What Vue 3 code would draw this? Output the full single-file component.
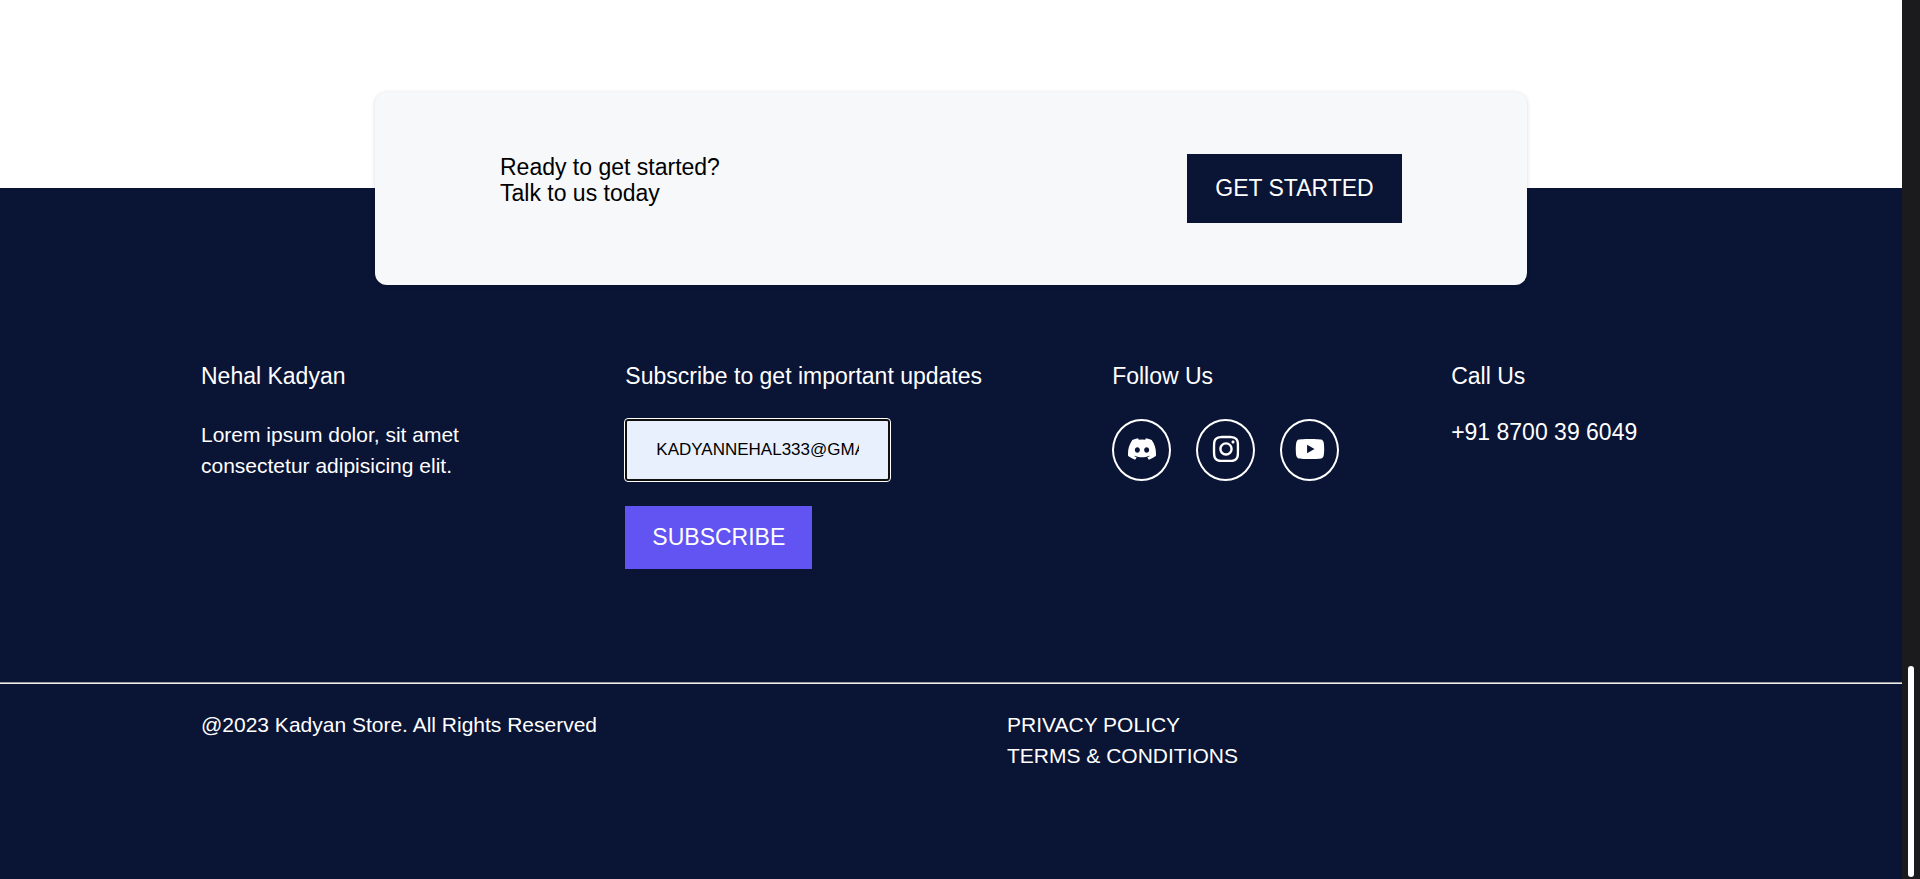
<script setup>
import { ref } from 'vue'

const email = ref('kadyannehal333@gmail.com')
const networks = [
  {
    name: 'Discord',
    size: 28,
    box: '0 0 16 16',
    path: 'M13.545 2.907a13.2 13.2 0 0 0-3.257-1.011.05.05 0 0 0-.052.025c-.141.25-.297.577-.406.833a12.2 12.2 0 0 0-3.658 0 8 8 0 0 0-.412-.833.05.05 0 0 0-.052-.025c-1.125.194-2.22.534-3.257 1.011a.04.04 0 0 0-.021.018C.356 6.024-.213 9.047.066 12.032q.003.022.021.037a13.3 13.3 0 0 0 3.995 2.02.05.05 0 0 0 .056-.019q.463-.63.818-1.329a.05.05 0 0 0-.01-.059l-.018-.011a9 9 0 0 1-1.248-.595.05.05 0 0 1-.02-.066l.015-.019q.127-.095.248-.195a.05.05 0 0 1 .051-.007c2.619 1.196 5.454 1.196 8.041 0a.05.05 0 0 1 .053.007q.121.1.248.195a.05.05 0 0 1-.004.085 8 8 0 0 1-1.249.594.05.05 0 0 0-.03.03.05.05 0 0 0 .003.041c.24.465.515.909.817 1.329a.05.05 0 0 0 .056.019 13.2 13.2 0 0 0 4.001-2.02.05.05 0 0 0 .021-.037c.334-3.451-.559-6.449-2.366-9.106a.03.03 0 0 0-.02-.019m-8.198 7.307c-.789 0-1.438-.724-1.438-1.612s.637-1.613 1.438-1.613c.807 0 1.45.73 1.438 1.613 0 .888-.637 1.612-1.438 1.612m5.316 0c-.788 0-1.438-.724-1.438-1.612s.637-1.613 1.438-1.613c.807 0 1.451.73 1.438 1.613 0 .888-.631 1.612-1.438 1.612'
  },
  {
    name: 'Instagram',
    size: 30,
    box: '0 0 448 512',
    path: 'M224.1 141c-63.6 0-114.9 51.3-114.9 114.9s51.3 114.9 114.9 114.9S339 319.5 339 255.9 287.7 141 224.1 141zm0 189.6c-41.1 0-74.7-33.5-74.7-74.7s33.5-74.7 74.7-74.7 74.7 33.5 74.7 74.7-33.6 74.7-74.7 74.7zm146.4-194.3c0 14.9-12 26.8-26.8 26.8-14.9 0-26.8-12-26.8-26.8s12-26.8 26.8-26.8 26.8 12 26.8 26.8zm76.1 27.2c-1.7-35.9-9.9-67.7-36.2-93.9-26.2-26.2-58-34.4-93.9-36.2-37-2.1-147.9-2.1-184.9 0-35.8 1.7-67.6 9.9-93.9 36.1s-34.4 58-36.2 93.9c-2.1 37-2.1 147.9 0 184.9 1.7 35.9 9.900 67.700 36.200 93.900s58 34.400 93.900 36.200c37 2.100 147.900 2.100 184.900 0 35.900-1.700 67.700-9.900 93.900-36.200 26.200-26.200 34.400-58 36.200-93.900 2.100-37 2.100-147.800 0-184.800zM398.800 388c-7.800 19.600-22.900 34.700-42.600 42.600-29.500 11.700-99.500 9-132.100 9s-102.700 2.600-132.100-9c-19.600-7.800-34.700-22.900-42.600-42.600-11.700-29.500-9-99.500-9-132.100s-2.600-102.700 9-132.100c7.800-19.600 22.900-34.700 42.600-42.600 29.500-11.700 99.500-9 132.100-9s102.700-2.600 132.100 9c19.600 7.800 34.700 22.900 42.600 42.600 11.700 29.500 9 99.500 9 132.100s2.700 102.700-9 132.100z'
  },
  {
    name: 'YouTube',
    size: 30,
    box: '0 0 576 512',
    path: 'M549.655 124.083c-6.281-23.650-24.787-42.276-48.284-48.597C458.781 64 288 64 288 64S117.220 64 74.629 75.486c-23.497 6.322-42.003 24.947-48.284 48.597-11.412 42.867-11.412 132.305-11.412 132.305s0 89.438 11.412 132.305c6.281 23.650 24.787 41.500 48.284 47.821C117.220 448 288 448 288 448s170.780 0 213.371-11.486c23.497-6.321 42.003-24.171 48.284-47.821 11.412-42.867 11.412-132.305 11.412-132.305s0-89.438-11.412-132.305zm-317.510 213.508V175.185l142.739 81.205-142.739 81.201z'
  }
]
</script>

<template>
  <div class="page">
    <main class="content">
      <section class="cta">
        <p>Ready to get started?<br />Talk to us today</p>
        <a class="btn btn-dark" href="#contact">Get Started</a>
      </section>

      <footer class="footer">
        <div class="columns">
          <section>
            <h3>Nehal Kadyan</h3>
            <p class="about">Lorem ipsum dolor, sit amet consectetur adipisicing elit.</p>
          </section>
          <section>
            <h3>Subscribe to get important updates</h3>
            <form class="subscribe" @submit.prevent>
              <input v-model="email" type="email" aria-label="Email" />
              <button class="btn btn-accent" type="submit">Subscribe</button>
            </form>
          </section>
          <section>
            <h3>Follow Us</h3>
            <div class="social">
              <a v-for="n in networks" :key="n.name" href="#social" :aria-label="n.name">
                <svg :width="n.size" :height="n.size" :viewBox="n.box" aria-hidden="true"><path :d="n.path" /></svg>
              </a>
            </div>
          </section>
          <section>
            <h3>Call Us</h3>
            <a class="phone" href="tel:+918700396049">+91 8700 39 6049</a>
          </section>
        </div>
        <hr />
        <div class="legal">
          <p>@2023 Kadyan Store. All Rights Reserved</p>
          <div>
            <p>PRIVACY POLICY</p>
            <p>TERMS &amp; CONDITIONS</p>
          </div>
        </div>
      </footer>
    </main>
    <div class="track"><div class="thumb"></div></div>
  </div>
</template>

<style>
body {
  background: #fff;
}
</style>

<style scoped>
* {
  box-sizing: border-box;
  margin: 0;
  padding: 0;
}
.page {
  display: flex;
  min-height: 100vh;
  font-family: Arial, 'Liberation Sans', sans-serif;
  font-size: 23px;
  line-height: 26px;
  color: #000;
}
.content {
  flex: 1;
  display: flex;
  flex-direction: column;
  padding-top: 92px;
}
.cta {
  position: relative;
  display: flex;
  justify-content: space-between;
  align-items: flex-start;
  width: 1152px;
  max-width: 90%;
  margin: 0 auto -97px;
  padding: 62px 125px;
  border-radius: 12px;
  background: #f6f8fa;
  box-shadow: 0 1px 4px rgba(0, 0, 0, 0.16);
}
.btn {
  display: block;
  border: 0;
  font: inherit;
  text-align: center;
  text-transform: uppercase;
  text-decoration: none;
  color: #fff;
  cursor: pointer;
}
.btn-dark {
  padding: 21px 28px 22px;
  min-width: 215px;
  background: #0a1435;
}
.btn-accent {
  padding: 18px 24px 19px;
  min-width: 187px;
  background: #6254f3;
}
.footer {
  flex: 1;
  padding-top: 175px;
  background: #0a1435;
  color: #fff;
}
.columns,
.legal {
  display: grid;
  column-gap: 112px;
  width: 1500px;
  max-width: 90%;
  margin: 0 auto;
}
.columns {
  grid-template-columns: 5fr 6fr 227px 4fr;
  padding-bottom: 113px;
}
h3 {
  margin-bottom: 30px;
  font-size: 23px;
  font-weight: 400;
  white-space: nowrap;
}
.about {
  line-height: 31px;
  font-size: 21px;
}
.subscribe {
  display: flex;
  flex-direction: column;
  align-items: flex-start;
  gap: 25px;
}
input {
  width: 265px;
  height: 62px;
  padding: 0 29px;
  border: 2px solid #101010;
  border-radius: 3px;
  outline: 1px solid #fff;
  background: #e8f0fe;
  font-family: inherit;
  font-size: 17px;
  text-transform: uppercase;
  color: #000;
}
.social {
  display: flex;
  gap: 25px;
}
.social a {
  display: flex;
  justify-content: center;
  align-items: center;
  width: 59px;
  height: 62px;
  padding-bottom: 2px;
  border: 2px solid #fff;
  border-radius: 50%;
}
.social svg {
  fill: #fff;
}
.phone {
  color: #fff;
  text-decoration: none;
}
hr {
  height: 2px;
  border: 0;
  border-top: 1px solid #9a9a9a;
  border-bottom: 1px solid #eee;
}
.legal {
  grid-template-columns: 1fr 1fr;
  padding-top: 25px;
  font-size: 21px;
  line-height: 31px;
}
.track {
  width: 18px;
  min-height: 100vh;
  display: flex;
  justify-content: center;
  align-items: flex-end;
  padding-bottom: 2px;
  background: #1b1a1d;
}
.thumb {
  width: 6px;
  height: 24vh;
  border-radius: 3px;
  background: #fff;
}
</style>
